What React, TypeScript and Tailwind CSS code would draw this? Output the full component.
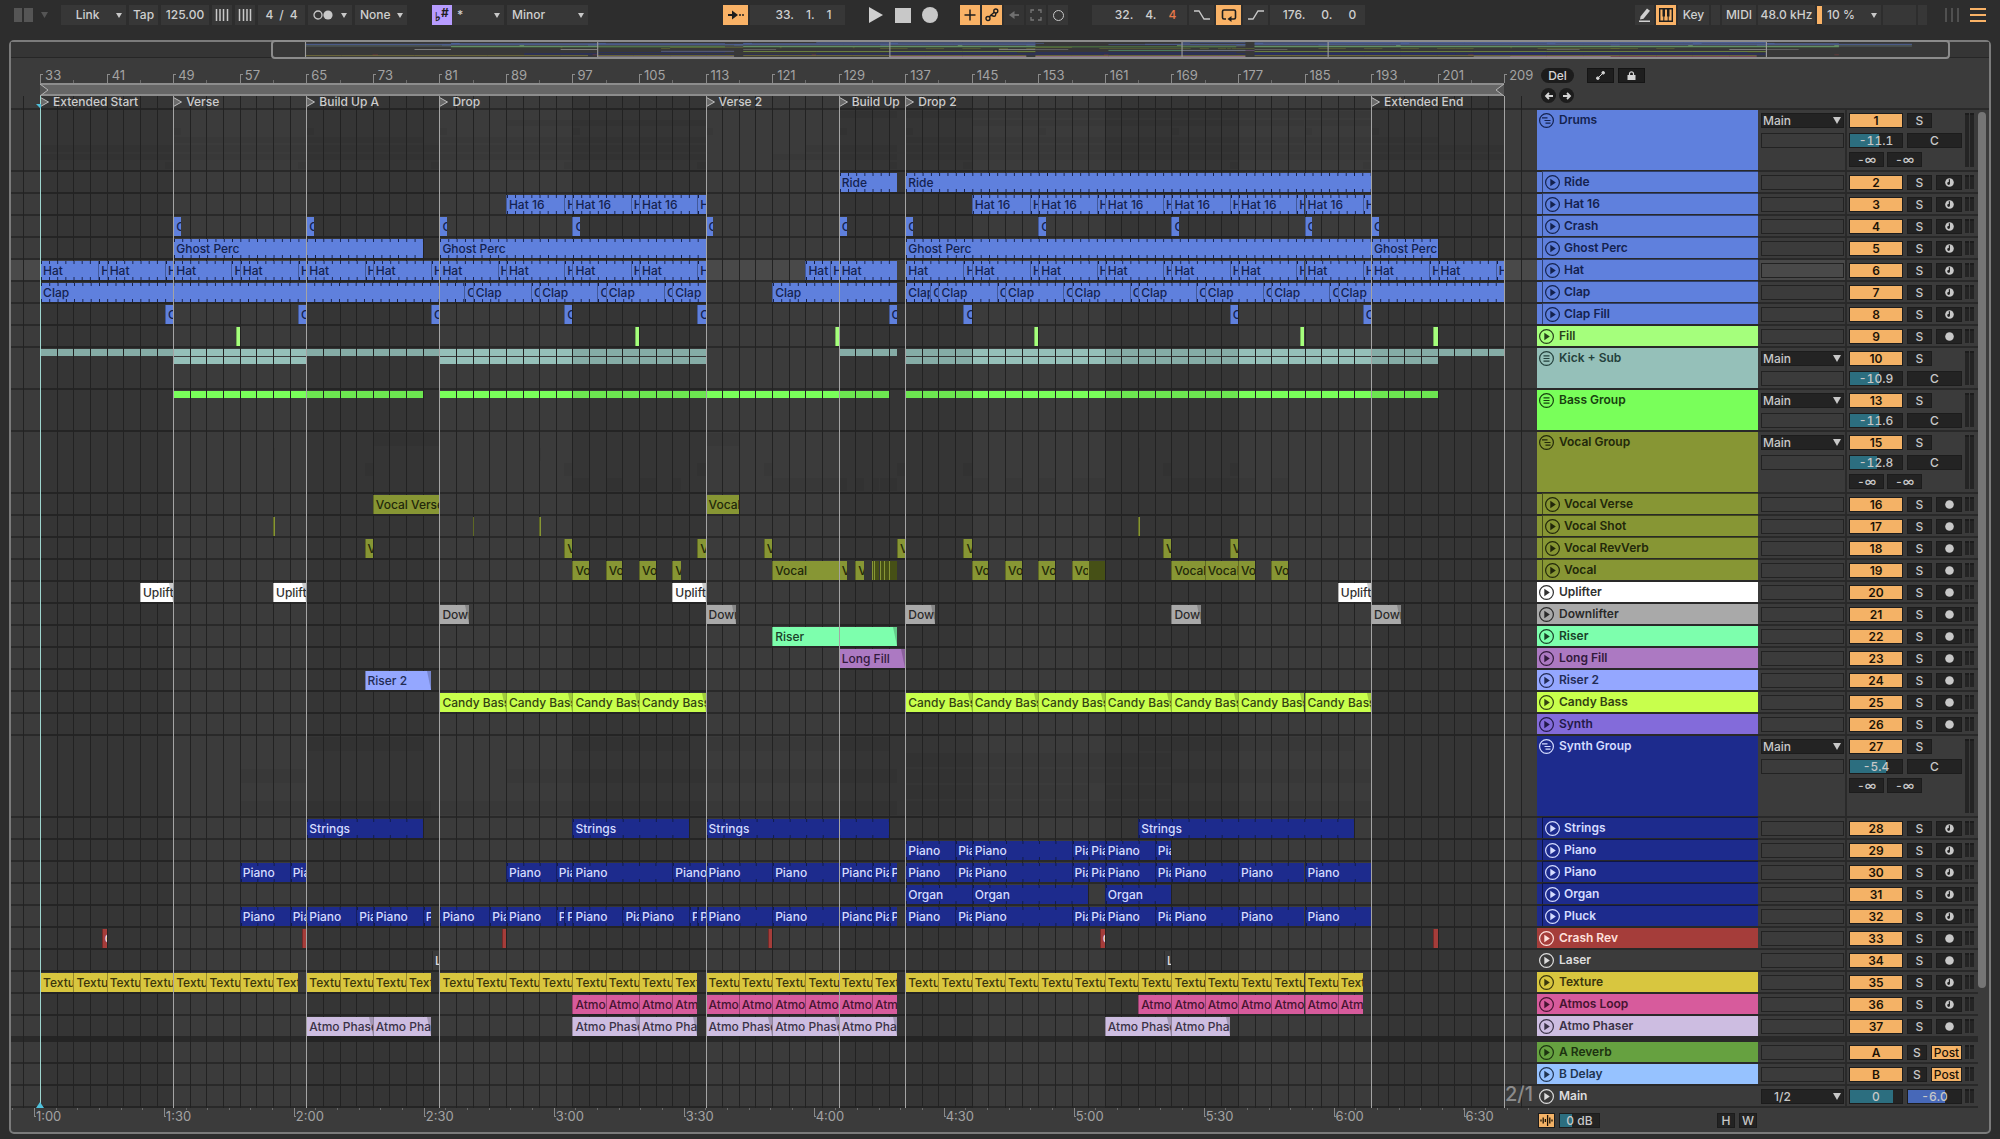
import type { CSSProperties, ReactNode } from "react";

type Clip = [start: number, end: number, label?: string];

type Track = {
  name: string;
  id: string;
  color: string;
  text: string;
  clips?: Clip[];
  kind?: "group" | "folded" | "track";
  rows?: Clip[][];
  child?: boolean;
  tick?: number;
  fade?: boolean;
  midi?: boolean;
  height?: string;
  gain?: string;
  fill?: number;
  sends?: boolean;
  selected?: boolean;
};

const VIEW_START = 29.5;
const VIEW_BARS = 183.45;
const pos = (bar: number) => `${((bar - VIEW_START) / VIEW_BARS) * 100}%`;
const span = (bars: number) => `${(bars / VIEW_BARS) * 100}%`;

const range = (from: number, to: number, step: number) => {
  const out: number[] = [];
  for (let n = from; n < to; n += step) out.push(n);
  return out;
};

// back-to-back clips, one between each pair of points
const chain = (...points: number[]): Clip[] => points.slice(1).map((end, i) => [points[i], end]);
const every = (from: number, to: number, step: number, end = to): Clip[] =>
  range(from, to, step).map((n) => [n, Math.min(n + step, end)]);
const hits = (starts: number[], length: number): Clip[] => starts.map((n) => [n, n + length]);
// eight bar phrase, the last bar is its own clip
const phrase = (from: number, to: number): Clip[] =>
  range(from, to, 8).flatMap((n): Clip[] => [
    [n, n + 7],
    [n + 7, n + 8],
  ]);

const BLUE = "bg-[#5f80dd]";
const BLUE_TEXT = "text-[#14224f]";
const OLIVE = "bg-[#879634]";
const OLIVE_TEXT = "text-[#22280a]";
const NAVY = "bg-[#1d2b8d]";
const NAVY_TEXT = "text-[#d5dcff]";

const PIANO_A = chain(137, 143, 145, 157, 159, 161, 167, 169);
const PIANO_B = [...chain(113, 121, 129, 133, 135, 136), ...PIANO_A, ...chain(169, 177, 185, 193)];

const TRACKS: Track[] = [
  { name: "Drums", id: "1", color: BLUE, text: BLUE_TEXT, kind: "group", height: "h-[62px]", gain: "-11.1", fill: 56, sends: true },
  { name: "Ride", id: "2", color: BLUE, text: BLUE_TEXT, child: true, midi: true, tick: 1, clips: [[129, 136], [137, 193]] },
  { name: "Hat 16", id: "3", color: BLUE, text: BLUE_TEXT, child: true, midi: true, tick: 1, clips: [...phrase(89, 113), ...phrase(145, 193)] },
  { name: "Crash", id: "4", color: BLUE, text: BLUE_TEXT, child: true, midi: true, clips: hits([49, 65, 81, 97, 113, 129, 137, 153, 169, 185, 193], 0.95) },
  { name: "Ghost Perc", id: "5", color: BLUE, text: BLUE_TEXT, child: true, midi: true, tick: 1, clips: [[49, 79], [81, 113], [137, 193], [193, 201]] },
  { name: "Hat", id: "6", color: BLUE, text: BLUE_TEXT, child: true, midi: true, tick: 1, selected: true, clips: [...phrase(33, 113), ...chain(125, 128, 129, 136), ...phrase(137, 209)] },
  {
    name: "Clap", id: "7", color: BLUE, text: BLUE_TEXT, child: true, midi: true, tick: 1,
    clips: [...chain(33, 84, 85, 92, 93, 100, 101, 108, 109, 113), [121, 136], ...chain(137, 140, 141, 148, 149, 156, 157, 164, 165, 172, 173, 180, 181, 188, 189, 209)],
  },
  { name: "Clap Fill", id: "8", color: BLUE, text: BLUE_TEXT, child: true, midi: true, clips: hits([48, 64, 80, 96, 112, 135, 144, 176, 192], 1) },
  { name: "Fill", id: "9", color: "bg-[#a5ff7c]", text: "text-[#28401c]", clips: hits([56.5, 104.5, 128.5, 152.5, 184.5, 200.5], 0.5) },
  {
    name: "Kick + Sub", id: "10", color: "bg-[#95c0b9]", text: "text-[#24403c]", kind: "folded", height: "h-[42px]", gain: "-10.9", fill: 56,
    rows: [[[33, 113], [129, 136], [137, 209]], [[49, 65], [81, 113], [137, 201]]],
  },
  { name: "Bass Group", id: "13", color: "bg-[#79ff5a]", text: "text-[#17400f]", kind: "folded", height: "h-[42px]", gain: "-11.6", fill: 56, rows: [[[49, 79], [81, 135], [137, 201]]] },
  { name: "Vocal Group", id: "15", color: OLIVE, text: OLIVE_TEXT, kind: "group", height: "h-[62px]", gain: "-12.8", fill: 52, sends: true },
  { name: "Vocal Verse", id: "16", color: OLIVE, text: OLIVE_TEXT, child: true, clips: [[73, 81], [113, 117]] },
  { name: "Vocal Shot", id: "17", color: OLIVE, text: OLIVE_TEXT, child: true, clips: hits([61, 85, 93, 165], 0.2) },
  { name: "Vocal RevVerb", id: "18", color: OLIVE, text: OLIVE_TEXT, child: true, clips: hits([72, 96, 112, 120, 136, 144, 168, 176], 1) },
  {
    name: "Vocal", id: "19", color: OLIVE, text: OLIVE_TEXT, child: true,
    clips: [
      ...hits([97, 101, 105], 2), [109, 110], [121, 129], [129, 130], [131, 132],
      [133, 133.2, "-"], [133.2, 133.9, "-"], [134, 134.4, "-"], [134.5, 135, "-"], [135, 136, "-"],
      ...hits([145, 149, 153, 157], 2), [159, 161, "-"], [169, 173], [173, 177], [177, 179], [181, 183],
    ],
  },
  { name: "Uplifter", id: "20", color: "bg-[#ffffff]", text: "text-[#303030]", fade: true, clips: hits([45, 61, 109, 189], 4) },
  { name: "Downlifter", id: "21", color: "bg-[#a9a9a9]", text: "text-[#2a2a2a]", fade: true, clips: hits([81, 113, 137, 169, 193], 3.6) },
  { name: "Riser", id: "22", color: "bg-[#7dffad]", text: "text-[#1b4029]", fade: true, clips: [[121, 136]] },
  { name: "Long Fill", id: "23", color: "bg-[#ac79c2]", text: "text-[#321a3c]", fade: true, clips: [[129, 137]] },
  { name: "Riser 2", id: "24", color: "bg-[#94a7ff]", text: "text-[#222b55]", fade: true, clips: [[72, 80]] },
  { name: "Candy Bass", id: "25", color: "bg-[#c8ff4c]", text: "text-[#334212]", fade: true, clips: [...every(81, 113, 8), ...every(137, 193, 8)] },
  { name: "Synth", id: "26", color: "bg-[#836bda]", text: "text-[#221948]" },
  { name: "Synth Group", id: "27", color: NAVY, text: NAVY_TEXT, kind: "group", height: "h-[82px]", gain: "-5.4", fill: 70, sends: true },
  { name: "Strings", id: "28", color: NAVY, text: NAVY_TEXT, child: true, midi: true, tick: 2, clips: [[65, 79], [97, 111], [113, 135], [165, 191]] },
  { name: "Piano", id: "29", color: NAVY, text: NAVY_TEXT, child: true, midi: true, tick: 2, clips: PIANO_A },
  { name: "Piano", id: "30", color: NAVY, text: NAVY_TEXT, child: true, midi: true, tick: 2, clips: [...chain(57, 63, 65), ...chain(89, 95, 97, 109, 113), ...PIANO_B] },
  { name: "Organ", id: "31", color: NAVY, text: NAVY_TEXT, child: true, midi: true, tick: 2, clips: [[137, 145], [145, 159], [161, 169]] },
  {
    name: "Pluck", id: "32", color: NAVY, text: NAVY_TEXT, child: true, midi: true, tick: 2,
    clips: [...chain(57, 63, 65, 71, 73, 79, 80), ...chain(81, 87, 89, 95, 96, 97, 103, 105, 111, 112, 113), ...PIANO_B].map(
      ([a, b]): Clip => [a, b, "Piano"],
    ),
  },
  {
    name: "Crash Rev", id: "33", color: "bg-[#a53d3a]", text: "text-[#ffe1dd]",
    clips: [[40.4, 41], [64.5, 65], [88.5, 89], [120.5, 121], [160.4, 161], [200.5, 201]],
  },
  { name: "Laser", id: "34", color: "bg-[#3b3b3b]", text: "text-[#dddddd]", clips: hits([80.1, 168.1], 0.9) },
  {
    name: "Texture", id: "35", color: "bg-[#d8c63f]", text: "text-[#3a350c]", midi: true,
    clips: [...every(33, 65, 4, 64), ...every(65, 81, 4, 80), ...every(81, 113, 4, 112), ...every(113, 137, 4, 136), ...every(137, 193, 4, 192)],
  },
  {
    name: "Atmos Loop", id: "36", color: "bg-[#d75b9c]", text: "text-[#451430]", midi: true,
    clips: [...every(97, 113, 4, 112), ...every(113, 137, 4, 136), ...every(165, 193, 4, 192)],
  },
  {
    name: "Atmo Phaser", id: "37", color: "bg-[#cdbde1]", text: "text-[#3a3246]", fade: true,
    clips: [...every(65, 81, 8, 80), ...every(97, 113, 8, 112), ...every(113, 137, 8, 136), ...every(161, 177, 8, 176)],
  },
];

const RETURNS: Track[] = [
  { name: "A Reverb", id: "A", color: "bg-[#66a140]", text: "text-[#1c3210]" },
  { name: "B Delay", id: "B", color: "bg-[#96c2ff]", text: "text-[#203450]" },
];

const LOCATORS: [number, string][] = [
  [33, "Extended Start"],
  [49, "Verse"],
  [65, "Build Up A"],
  [81, "Drop"],
  [113, "Verse 2"],
  [129, "Build Up"],
  [137, "Drop 2"],
  [193, "Extended End"],
];

const TIMES = ["1:00", "1:30", "2:00", "2:30", "3:00", "3:30", "4:00", "4:30", "5:00", "5:30", "6:00", "6:30"];

/* ---------- transport bar ---------- */

const Cell = ({ className = "", children }: { className?: string; children?: ReactNode }) => (
  <div className={`flex h-5 items-center justify-center whitespace-nowrap bg-[#373737] ${className}`}>{children}</div>
);

const Tool = ({ label, className = "", children }: { label: string; className?: string; children?: ReactNode }) => (
  <button type="button" aria-label={label} className={`flex h-5 items-center justify-center whitespace-nowrap ${className}`}>
    {children}
  </button>
);

const Pick = ({ label, value, className = "" }: { label: string; value: string; className?: string }) => (
  <div className={`relative h-5 bg-[#373737] ${className}`}>
    <select aria-label={label} defaultValue={value} className="h-full w-full appearance-none pl-[5px] outline-none">
      <option>{value}</option>
    </select>
    <Caret className="pointer-events-none absolute right-1 top-2" />
  </div>
);

const Caret = ({ className = "" }: { className?: string }) => (
  <svg viewBox="0 0 6 5" className={`h-[5px] w-[6px] fill-[#c8c8c8] ${className}`}>
    <path d="M0 0h6L3 5z" />
  </svg>
);

const Transport = () => (
  <header className="flex h-10 items-start px-[14px] pt-[5px] text-[12px] leading-5 font-medium text-[#cfcfcf]">
    <div className="flex gap-[3px]">
      <svg viewBox="0 0 36 20" className="mr-[8px] h-5 w-9">
        <path d="M0 3h8v14H0zM10 3h9v14h-9z" fill="#555" />
        <path d="M27 7h7l-3.500 6z" fill="#555" />
      </svg>
      <div className="relative h-5 w-[65px] bg-[#373737]">
        <button type="button" className="h-full w-[53px] text-center">Link</button>
        <Caret className="absolute right-1 top-2" />
      </div>
      <Tool label="Tap tempo" className="w-[29px] bg-[#373737]">Tap</Tool>
      <input aria-label="Tempo" defaultValue="125.00" className="h-5 w-[48px] bg-[#373737] text-center outline-none" />
      <Tool label="Nudge down" className="w-[20px] bg-[#373737]">
        <svg viewBox="0 0 14 12" className="h-3 w-[14px] stroke-[#c8c8c8]">
          <path d="M1.500 0v12M5 0v12M8.500 0v12M12.500 0v12" strokeWidth="1.500" />
        </svg>
      </Tool>
      <Tool label="Nudge up" className="w-[20px] bg-[#373737]">
        <svg viewBox="0 0 14 12" className="h-3 w-[14px] stroke-[#c8c8c8]">
          <path d="M1.500 0v12M5.500 0v12M9 0v12M12.500 0v12" strokeWidth="1.500" />
        </svg>
      </Tool>
      <Cell className="w-[47px] gap-[6px]">
        <span>4</span>
        <span>/</span>
        <span>4</span>
      </Cell>
      <Tool label="Metronome" className="w-[44px] gap-2 bg-[#373737]">
        <svg viewBox="0 0 20 10" className="h-[10px] w-5">
          <circle cx="5" cy="5" r="4" fill="none" stroke="#c8c8c8" strokeWidth="1.300" />
          <circle cx="15" cy="5" r="4.600" fill="#c8c8c8" />
        </svg>
        <Caret />
      </Tool>
      <Pick label="Quantization" value="None" className="w-[52px]" />
      <Tool label="Scale mode" className="ml-[22px] w-[20px] bg-[#b79cff] text-[12px] font-bold text-[#1e1e1e]">
        <span className="pt-1">♭</span>
        <span className="pb-1">#</span>
      </Tool>
      <Pick label="Root note" value="*" className="-ml-[3px] w-[52px]" />
      <Pick label="Scale" value="Minor" className="w-[81px]" />
    </div>
    <div className="flex-1" />
    <div className="flex gap-[2px]">
      <Tool label="Follow" className="w-[25px] bg-[#f9b266]">
        <svg viewBox="0 0 18 12" className="h-3 w-[18px]">
          <path d="M1 6h5" stroke="#1e1e1e" strokeWidth="2" />
          <path d="M5 1.500L11 6l-6 4.500z" fill="#1e1e1e" />
          <path d="M12 6h2M15 6h2" stroke="#1e1e1e" strokeWidth="1.500" />
        </svg>
      </Tool>
      <Cell className="w-[95px] gap-3 pl-3">
        <span>33.</span>
        <span>1.</span>
        <span>1</span>
      </Cell>
      <div className="flex h-5 w-[111px] items-center justify-center gap-[11px]">
        <button type="button" aria-label="Play">
          <svg viewBox="0 0 16 16" className="h-4 w-4 fill-[#d0d0d0]">
            <path d="M1 0l14 8-14 8z" />
          </svg>
        </button>
        <button type="button" aria-label="Stop" className="h-[15px] w-[16px] bg-[#c8c8c8]" />
        <button type="button" aria-label="Record" className="size-4 rounded-full bg-[#c8c8c8]" />
      </div>
      <Tool label="Overdub" className="w-[20px] bg-[#f9b266]">
        <svg viewBox="0 0 12 12" className="size-3 stroke-[#1e1e1e]">
          <path d="M6 .500v11M.500 6h11" strokeWidth="1.500" />
        </svg>
      </Tool>
      <Tool label="Automation arm" className="w-[20px] bg-[#f9b266]">
        <svg viewBox="0 0 14 14" className="size-[14px] fill-none stroke-[#1e1e1e]" strokeWidth="1.400">
          <circle cx="3" cy="10.500" r="2" />
          <circle cx="10.800" cy="3" r="2" />
          <path d="M4.300 9l1.500-1.700 3 .900c1.500.300 2-.800 2-3.200M5.800 7.300L9.300 4.300" />
        </svg>
      </Tool>
      <Tool label="Re-enable automation" className="w-[20px] bg-[#343434]">
        <svg viewBox="0 0 12 12" className="size-3">
          <path d="M11 6H5" stroke="#707070" strokeWidth="1.800" />
          <path d="M6.500 2v8L1 6z" fill="#707070" />
        </svg>
      </Tool>
      <Tool label="Capture" className="w-[20px] bg-[#343434]">
        <svg viewBox="0 0 12 12" className="size-3 fill-none stroke-[#777]" strokeWidth="1.300">
          <path d="M1 4V1h3M8 1h3v3M11 8v3H8M4 11H1V8" />
        </svg>
      </Tool>
      <Tool label="Session record" className="w-[20px] bg-[#373737]">
        <span className="size-[11px] rounded-full border-[1.500px] border-[#c8c8c8]" />
      </Tool>
      <Cell className="ml-[22px] w-[95px] gap-3 pl-3">
        <span>32.</span>
        <span>4.</span>
        <span className="text-[#e8794a]">4</span>
      </Cell>
      <Tool label="Punch in" className="w-[25px] bg-[#373737]">
        <svg viewBox="0 0 16 12" className="h-3 w-4 fill-none stroke-[#c8c8c8]" strokeWidth="1.400">
          <path d="M0 2h5l5 8h6" />
        </svg>
      </Tool>
      <Tool label="Loop" className="w-[25px] bg-[#f9b266]">
        <svg viewBox="0 0 16 14" className="h-[14px] w-4 fill-none stroke-[#1e1e1e]" strokeWidth="1.600">
          <path d="M5 11H3a1.500 1.500 0 01-1.500-1.500V3.500A1.500 1.500 0 013 2h10a1.500 1.500 0 011.500 1.500v6A1.500 1.500 0 0113 11H9" />
          <path d="M10.500 8L6.500 11l4 3z" fill="#1e1e1e" stroke="none" />
        </svg>
      </Tool>
      <Tool label="Punch out" className="w-[25px] bg-[#373737]">
        <svg viewBox="0 0 16 12" className="h-3 w-4 fill-none stroke-[#c8c8c8]" strokeWidth="1.400">
          <path d="M0 10h5l5-8h6" />
        </svg>
      </Tool>
      <Cell className="w-[95px] gap-4 pl-1">
        <span>176.</span>
        <span>0.</span>
        <span>0</span>
      </Cell>
    </div>
    <div className="flex-[2]" />
    <div className="flex gap-[2px]">
      <Tool label="Draw mode" className="w-[19px] bg-[#373737]">
        <svg viewBox="0 0 14 14" className="size-[14px] fill-[#d0d0d0]">
          <path d="M2.500 8.500L9 .500l3 2.200L5.500 10.700 2 11.500zM1 12.500h11v1.500H1z" />
        </svg>
      </Tool>
      <Tool label="Computer MIDI keyboard" className="w-[20px] bg-[#f9b266]">
        <svg viewBox="0 0 14 14" className="size-[14px]">
          <path d="M.700.700h12.600v12.600H.700z" fill="none" stroke="#1e1e1e" strokeWidth="1.400" />
          <path d="M3.500 1h2.500v7.500h-2.500zM8 1h2.500v7.500H8z" fill="#1e1e1e" />
          <path d="M4.800 8v5M9.200 8v5" stroke="#1e1e1e" />
        </svg>
      </Tool>
      <Tool label="Key map mode" className="w-[31px] bg-[#373737]">Key</Tool>
      <Cell className="w-[9px]" />
      <Tool label="MIDI map mode" className="w-[34px] bg-[#373737]">MIDI</Tool>
      <Cell className="w-[57px]">48.0 kHz</Cell>
      <div className="flex">
        <span className="my-[1px] w-[5px] bg-[#f9b266]" />
        <Pick label="CPU load" value="10 %" className="w-[59px]" />
      </div>
      <Cell className="w-[33px]" />
      <Cell className="w-[9px]" />
      <svg viewBox="0 0 16 20" className="ml-[15px] h-5 w-4 stroke-[#505050]" strokeWidth="2">
        <path d="M2 3v14M8 3v14M14 3v14" />
      </svg>
      <button type="button" aria-label="Menu" className="ml-2 flex h-5 w-[16px] flex-col justify-center gap-[4px]">
        <span className="h-[2px] w-full bg-[#f9b266]" />
        <span className="h-[2px] w-full bg-[#f9b266]" />
        <span className="h-[2px] w-full bg-[#f9b266]" />
      </button>
    </div>
  </header>
);

/* ---------- timeline ---------- */

const Overview = () => {
  const lines = TRACKS.flatMap((t) => (t.rows ? t.rows.map((clips) => ({ ...t, clips })) : t.kind === "group" ? [] : [t]));
  return (
    <div className="flex h-[16px] border-b border-[#262626] bg-[#353535]">
      <div className="w-[260px]" />
      <div className="relative z-10 -my-[2px] h-[19px] flex-1 rounded-[4px] border-2 border-[#8c8c8c] bg-[#383838]">
        <svg viewBox={`${VIEW_START} 0 ${VIEW_BARS} ${lines.length}`} preserveAspectRatio="none" className="h-full w-full opacity-75">
          {lines.map((t, i) =>
            t.clips?.map(([a, b]) => (
              <rect key={`${t.id}-${i}-${a}`} x={a} y={i} width={b - a} height={1} fill={t.color.slice(4, 11)} />
            )),
          )}
          {[33, 65, 97, 129, 145, 193].map((bar) => (
            <rect key={bar} x={bar} y={0} width={0.12} height={lines.length} fill="#c0c0c0" />
          ))}
        </svg>
      </div>
      <div className="w-[39px]" />
    </div>
  );
};

const Grid = () => (
  <div className="pointer-events-none absolute inset-0 z-10 overflow-hidden">
    {range(33, 209, 32).map((bar) => (
      <span key={bar} className="absolute inset-y-0 bg-black/10" style={{ left: pos(bar), width: span(16) }} />
    ))}
    {range(31, 213, 2).map((bar) => (
      <span key={bar} className="absolute inset-y-0 w-px bg-[#222222]" style={{ left: pos(bar) }} />
    ))}
  </div>
);

const ClipView = ({ clip, track }: { clip: Clip; track: Track }) => {
  const [start, end, label = track.name] = clip;
  const length = end - start;
  const box: CSSProperties = { left: pos(start), width: span(length) };
  if (label === "-") {
    return <span className="absolute bottom-0 top-px z-20 border-l border-[#879634] bg-[#465016]" style={box} />;
  }
  return (
    <div
      className={`absolute bottom-0 top-px z-20 overflow-hidden whitespace-nowrap border-l border-black/30 text-[12px] leading-[19px] font-medium ${track.color} ${track.text}`}
      style={box}
    >
      {track.tick && (
        <>
          <span
            className="absolute inset-x-0 top-0 h-[3px] bg-[linear-gradient(to_right,#111c46_1px,transparent_1px)]"
            style={{ backgroundSize: `${(100 * track.tick) / length}% 100%` }}
          />
          <span
            className="absolute inset-x-0 bottom-0 h-[3px] bg-[linear-gradient(to_right,#111c46_1px,transparent_1px)]"
            style={{ backgroundSize: `${(100 * track.tick) / length}% 100%` }}
          />
        </>
      )}
      {track.fade && (
        <svg viewBox="0 0 4 19" preserveAspectRatio="none" className="absolute right-0 top-0 h-full w-1">
          <path d="M0 0h4v19z" fill="#000" opacity="0.200" />
        </svg>
      )}
      {length > 0.55 && <span className="relative pl-[2px]">{label}</span>}
    </div>
  );
};

// group lanes show a dimmed miniature of the tracks inside
const Miniature = ({ tracks }: { tracks: Track[] }) => (
  <div className="flex h-full flex-col">
    {tracks.map((t) => (
      <div key={t.id} className="relative flex-1">
        {t.clips?.map(([a, b]) => (
          <span key={a} className="absolute inset-y-px bg-black/5" style={{ left: pos(a), width: span(b - a) }} />
        ))}
      </div>
    ))}
  </div>
);

const childrenOf = (group: Track) => {
  const from = TRACKS.indexOf(group) + 1;
  const count = TRACKS.slice(from).findIndex((t) => !t.child);
  return TRACKS.slice(from, from + count);
};

const Lane = ({ track }: { track: Track }) => (
  <div className={`relative border-b-2 border-[#292929] ${track.height ?? "h-[22px]"} ${track.selected ? "bg-[#494949]" : ""}`}>
    {track.kind === "group" && <Miniature tracks={childrenOf(track)} />}
    {track.rows && (
      <div className="flex flex-col gap-px pt-px">
        {track.rows.map((row, i) => (
          <div key={i} className="relative h-[7px]">
            {row.map(([a, b]) => (
              <span key={a} className={`absolute inset-y-0 ${track.color}`} style={{ left: pos(a), width: span(b - a) }} />
            ))}
          </div>
        ))}
      </div>
    )}
    {track.clips?.map((clip) => (
      <ClipView key={clip[0]} clip={clip} track={track} />
    ))}
  </div>
);

const Ruler = () => (
  <div className="relative h-[25px] overflow-hidden text-[13px] leading-4 text-[#a3a3a3]">
    {range(33, 213, 8).map((bar) => (
      <span key={bar} className="absolute bottom-0 h-4 pl-[5px]" style={{ left: pos(bar) }}>
        <span className="absolute bottom-0 left-0 h-[9px] w-[3px] border-l border-t border-[#8a8a8a]" />
        {bar}
      </span>
    ))}
    {range(37, 209, 8).map((bar) => (
      <span key={bar} className="absolute bottom-0 h-[3px] w-px bg-[#6c6c6c]" style={{ left: pos(bar) }} />
    ))}
  </div>
);

const Timeline = () => (
  <section className="relative flex min-w-0 flex-1 flex-col">
    <Ruler />
    <div className="relative h-[13px]">
      <div
        className="absolute inset-y-0 flex items-center justify-between border-y-2 border-[#8d8d8d] bg-[#666666]"
        style={{ left: pos(33), width: span(176) }}
      >
        <svg viewBox="0 0 9 12" className="h-3 w-[9px] fill-[#555] stroke-[#b5b5b5]">
          <path d="M0 0l8 6-8 6" />
        </svg>
        <svg viewBox="0 0 9 12" className="h-3 w-[9px] fill-[#555] stroke-[#b5b5b5]">
          <path d="M9 0L1 6l8 6" />
        </svg>
      </div>
    </div>
    <div className="relative">
      <Grid />
      <div className="relative h-[14px] border-b-2 border-[#292929] text-[12px] leading-3 font-medium text-[#cccccc]">
        {LOCATORS.map(([bar, name]) => (
          <span key={name} className="absolute top-0 z-20 flex items-center gap-1 whitespace-nowrap" style={{ left: pos(bar) }}>
            <svg viewBox="0 0 9 10" className="h-[10px] w-[9px] fill-[#6a6a6a] stroke-[#bcbcbc]">
              <path d="M.500.500l8 4.500-8 4.500z" />
            </svg>
            {name}
          </span>
        ))}
      </div>
      {TRACKS.map((track) => (
        <Lane key={track.id} track={track} />
      ))}
      <div className="border-t-4 border-[#292929]">
        <div className="h-[22px] border-b-2 border-[#292929]" />
        <div className="h-[22px] border-b-2 border-[#292929]" />
        <div className="h-[22px] border-b-2 border-[#292929]" />
      </div>
      {LOCATORS.map(([bar]) => (
        <span
          key={bar}
          className={`absolute inset-y-0 z-30 w-px ${bar === 33 ? "bg-[#9fd6cf]" : "bg-[#a4a4a4]"}`}
          style={{ left: pos(bar) }}
        />
      ))}
      <span className="absolute inset-y-0 z-30 w-px bg-[#a4a4a4]" style={{ left: pos(209) }} />
      <span className="absolute bottom-1 right-1 z-30 text-[20px] leading-5 font-medium text-[#8b8b8b]">2/1</span>
      <svg viewBox="0 0 8 6" className="absolute bottom-0 z-30 -ml-1 h-[6px] w-2 fill-[#4fc1dc]" style={{ left: pos(33) }}>
        <path d="M4 0l4 6H0z" />
      </svg>
      <svg viewBox="0 0 5 5" className="absolute top-2 z-30 -ml-1 size-[5px] fill-[#4fc1dc]" style={{ left: pos(33) }}>
        <path d="M0 0h5v5z" />
      </svg>
    </div>
    <div className="relative h-6 overflow-hidden text-[13px] leading-4 text-[#a3a3a3]">
      {range(0, 71, 1).map((n) => (
        <span key={n} className="absolute top-0 h-[2px] w-px bg-[#6c6c6c]" style={{ left: pos(32.25 + (n - 1) * 2.604) }} />
      ))}
      {TIMES.map((time, i) => (
        <span key={time} className="absolute top-0 pl-[2px]" style={{ left: pos(32.25 + i * 15.625) }}>
          <span className="absolute left-0 top-0 h-[9px] w-[2px] border-b border-l border-[#8a8a8a]" />
          {time}
        </span>
      ))}
    </div>
  </section>
);

/* ---------- track headers and mixer ---------- */

const FoldIcon = ({ kind }: { kind: Track["kind"] }) => (
  <svg viewBox="0 0 15 15" className="size-[15px] shrink-0 fill-none stroke-current" strokeWidth="1.200">
    <circle cx="7.500" cy="7.500" r="6.900" />
    {kind === "group" && <path d="M3 4.800h5.500M5.500 7.500h6M6.500 10.200h5" />}
    {kind === "folded" && <path d="M4.500 4.800h6M4.500 7.500h6M4.500 10.200h6" />}
    {!kind && <path d="M5.300 3.800l5.500 3.700-5.500 3.700z" fill="currentColor" stroke="none" />}
  </svg>
);

const FIELD = "h-[15px] border border-[#1c1c1c] bg-[#232323] text-center text-[12px] leading-[13px] font-medium text-[#c8c8c8]";

const Activator = ({ id }: { id: string }) => (
  <button
    type="button"
    aria-label={`Track ${id} on`}
    className="h-[15px] w-[54px] border border-[#1c1c1c] bg-[#f4b266] text-[12px] leading-[13px] font-semibold text-[#1b1206]"
  >
    {id}
  </button>
);

const Meter = () => (
  <div className="flex gap-px py-[3px] pl-[3px]">
    <span className="w-1 border-t-2 border-[#1c1c1c] bg-[#242424]" />
    <span className="w-1 border-t-2 border-[#1c1c1c] bg-[#242424]" />
  </div>
);

const Value = ({ label, value, fill, className, tone = "bg-[#2c6e7f]" }: { label: string; value: string; fill: number; className: string; tone?: string }) => (
  <div className={`relative ${FIELD} ${className}`}>
    <span className={`absolute inset-y-0 left-0 ${tone}`} style={{ width: `${fill}%` }} />
    <input aria-label={label} defaultValue={value} className="relative block h-[13px] w-full bg-transparent text-center tabular-nums outline-none" />
  </div>
);

const Routing = ({ label, value }: { label: string; value: string }) => (
  <div className="relative h-[15px]">
    <select
      aria-label={label}
      defaultValue={value}
      className={`block h-[15px] w-full appearance-none border border-[#1c1c1c] bg-[#232323] text-[12px] leading-[13px] font-medium text-[#c8c8c8] outline-none ${value === "Main" ? "pl-px" : "pl-3"}`}
    >
      <option>{value}</option>
    </select>
    <svg viewBox="0 0 8 7" className="pointer-events-none absolute right-[3px] top-1 h-[7px] w-2 fill-[#c8c8c8]">
      <path d="M0 0h8L4 7z" />
    </svg>
  </div>
);

const EmptySlot = () => <div className="h-[15px] border border-[#222222]" />;

const NameBox = ({ track }: { track: Track }) => (
  <div className={`flex w-[221px] ${track.child ? track.color : ""}`}>
    <div
      className={`flex flex-1 items-start pl-[2px] pt-[2px] ${track.child ? "-mt-px ml-[5px] gap-1 border-l border-t border-black/50" : "gap-[5px]"} ${track.color} ${track.text}`}
    >
      <button type="button" aria-label={`Fold ${track.name}`} className="flex h-4 items-center">
        <FoldIcon kind={track.kind} />
      </button>
      <span className="text-[12px] leading-4 font-semibold">{track.name}</span>
    </div>
  </div>
);

const HeaderRow = ({ track, children }: { track: Track; children: ReactNode }) => (
  <div className={`flex border-b-2 border-[#292929] ${track.height ?? "h-[22px]"}`}>
    <NameBox track={track} />
    <div className={`ml-[2px] flex w-[85px] flex-col gap-[5px] px-px pt-[3px] ${track.selected ? "bg-[#494949]" : ""}`}>
      {track.gain ? <Routing label={`${track.name} output`} value="Main" /> : null}
      <EmptySlot />
    </div>
    <div className="flex flex-1 border-l-2 border-[#2a2a2a] pl-[2px]">
      <div className="w-[113px] pt-[3px]">{children}</div>
      <Meter />
    </div>
  </div>
);

const TrackRow = ({ track }: { track: Track }) => (
  <HeaderRow track={track}>
    <div className="flex gap-[4px]">
      <Activator id={track.id} />
      <button type="button" aria-label={`Solo ${track.name}`} className={`${FIELD} w-[25px]`}>S</button>
      {!track.kind && (
        <button type="button" aria-label={`Arm ${track.name}`} className={`${FIELD} flex w-[26px] items-center justify-center`}>
          <svg viewBox="0 0 9 9" className="size-[9px]">
            <circle cx="4.500" cy="4.500" r="4.300" fill="#c8c8c8" />
            {track.midi && <path d="M5 1.300v4.200a1.400 1.400 0 11-1.200-1.400V1.300z" fill="#232323" />}
          </svg>
        </button>
      )}
    </div>
    {track.gain && (
      <div className="mt-[5px] flex gap-[4px]">
        <Value label={`${track.name} volume`} value={track.gain} fill={track.fill ?? 0} className="w-[54px]" />
        <Value label={`${track.name} pan`} value="C" fill={0} className="w-[55px]" />
      </div>
    )}
    {track.sends && (
      <div className="mt-[4px] flex gap-[3px]">
        <Value label={`${track.name} send A`} value="-∞" fill={0} className="w-[35px]" />
        <Value label={`${track.name} send B`} value="-∞" fill={0} className="w-[35px]" />
      </div>
    )}
  </HeaderRow>
);

const ReturnRow = ({ track }: { track: Track }) => (
  <HeaderRow track={track}>
    <div className="flex gap-[4px]">
      <Activator id={track.id} />
      <button type="button" aria-label={`Solo ${track.name}`} className={`${FIELD} w-[20px]`}>S</button>
      <button type="button" className="h-[15px] w-[31px] border border-[#1c1c1c] bg-[#f4b266] text-[12px] leading-[13px] font-medium text-[#1b1206]">
        Post
      </button>
    </div>
  </HeaderRow>
);

const MainRow = () => (
  <div className="flex h-[22px] border-b-2 border-[#292929]">
    <NameBox track={{ name: "Main", id: "main", color: "bg-[#3b3b3b]", text: "text-[#dddddd]" }} />
    <div className="ml-[2px] w-[85px] px-px pt-[3px]">
      <Routing label="Cue output" value="1/2" />
    </div>
    <div className="flex flex-1 border-l-2 border-[#2a2a2a] pl-[2px]">
      <div className="flex w-[113px] gap-[4px] pt-[3px]">
        <Value label="Main volume" value="0" fill={83} className="w-[54px]" />
        <Value label="Cue volume" value="-6.0" fill={69} tone="bg-[#4768b8]" className="w-[55px]" />
      </div>
      <Meter />
    </div>
  </div>
);

const Headers = () => (
  <aside className="flex w-[452px] shrink-0 flex-col">
    <div className="flex h-[52px] flex-col gap-[5px] pl-1 pt-[10px] text-[#d5d5d5]">
      <div className="flex">
        <button type="button" className="h-[15px] w-[33px] rounded-full bg-[#1c1c1c] text-[12px] leading-[15px] font-medium">Del</button>
        <button type="button" aria-label="Automation mode" className="ml-[13px] flex h-[15px] w-[27px] items-center justify-center border border-[#151515] bg-[#1e1e1e]">
          <svg viewBox="0 0 9 9" className="size-[9px] fill-current stroke-current">
            <path d="M2 7l5-5" />
            <circle cx="1.800" cy="7.200" r="1.300" />
            <circle cx="7.200" cy="1.800" r="1.300" />
          </svg>
        </button>
        <button type="button" aria-label="Lock envelopes" className="ml-[4px] flex h-[15px] w-[27px] items-center justify-center border border-[#151515] bg-[#1e1e1e]">
          <svg viewBox="0 0 9 9" className="size-[9px]">
            <path d="M2.500 4V2.800a2 2 0 014 0V4" fill="none" stroke="currentColor" strokeWidth="1.200" />
            <path d="M.500 4h8v5h-8z" fill="currentColor" />
          </svg>
        </button>
      </div>
      <div className="flex gap-[3px]">
        <button type="button" aria-label="Previous locator" className="flex size-[15px] items-center justify-center rounded-full bg-[#1c1c1c]">
          <svg viewBox="0 0 10 10" className="size-[10px] fill-none stroke-current" strokeWidth="1.800">
            <path d="M9 5H2M5 2L2 5l3 3" />
          </svg>
        </button>
        <button type="button" aria-label="Next locator" className="flex size-[15px] items-center justify-center rounded-full bg-[#1c1c1c]">
          <svg viewBox="0 0 10 10" className="size-[10px] fill-none stroke-current" strokeWidth="1.800">
            <path d="M1 5h7M5 2l3 3-3 3" />
          </svg>
        </button>
      </div>
    </div>
    <div className="-mt-[2px] flex border-t-2 border-[#292929]">
      <div className="flex-1">
        {TRACKS.map((track) => (
          <TrackRow key={track.id} track={track} />
        ))}
        <div className="border-t-4 border-[#292929]">
          {RETURNS.map((track) => (
            <ReturnRow key={track.id} track={track} />
          ))}
          <MainRow />
        </div>
      </div>
      <div className="w-[11px] pt-[2px]">
        <div className="h-[88%] w-2 rounded-full bg-[#757575]" />
      </div>
    </div>
    <div className="flex h-6 items-start gap-[4px] pl-px pt-[5px]">
      <button type="button" aria-label="Show meters" className="flex h-[15px] w-[17px] items-center justify-center border border-[#1c1c1c] bg-[#f4b266]">
        <svg viewBox="0 0 13 11" className="h-[11px] w-[13px] stroke-[#1b1206]" strokeWidth="1.300">
          <path d="M1 4.500v2M3.200 2.500v6M5.400 4v3M7.600 0v11M9.800 2.500v6M12 4.500v2" />
        </svg>
      </button>
      <Value label="Preview volume" value="0 dB" fill={30} className="w-[41px]" />
      <div className="w-[109px]" />
      <button type="button" className={`${FIELD} w-[18px]`}>H</button>
      <button type="button" className={`${FIELD} w-[18px]`}>W</button>
    </div>
  </aside>
);

export default function App() {
  return (
    <main className="min-h-screen bg-[#2d2d2d] pb-[5px] font-['Inter',sans-serif]">
      <Transport />
      <div className="mx-[9px] rounded-[5px] border-2 border-[#7b7b7b] bg-[#3b3b3b]">
        <Overview />
        <div className="flex">
          <Timeline />
          <Headers />
        </div>
      </div>
    </main>
  );
}
